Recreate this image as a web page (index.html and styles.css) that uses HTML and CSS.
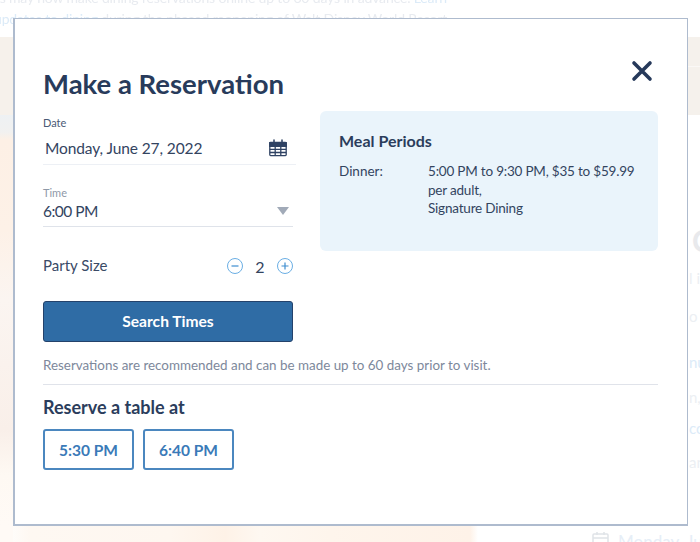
FILE: index.html
```html
<!DOCTYPE html>
<html lang="en">
  <head>
    <meta charset="UTF-8" />
    <meta name="viewport" content="width=device-width, initial-scale=1.0" />
    <title>Make a Reservation</title>
    <link rel="stylesheet" href="styles.css">
  </head>
  <body>
    <div class="backdrop">
      <div class="intro">
        <p class="intro-first">Guests may now make dining reservations online up to 60 days in advance. <span class="link">Learn</span></p>
        <p class="intro-second"><span class="link">updates to dining</span> during the phased reopening of Walt Disney World Resort</p>
      </div>
      <div class="photo"></div>
      <div class="side">
        <span class="side-big">C</span>
        <span class="side-line s1">l in</span>
        <span class="side-line s2">o t</span>
        <span class="side-line s3 link">nu</span>
        <span class="side-line s4">n,</span>
        <span class="side-line s5 link">co</span>
        <span class="side-line s6">an</span>
      </div>
      <div class="date-behind">
        <svg width="17" height="16" viewBox="0 0 17 16" fill="none" stroke="#e0e3e8" stroke-width="1.5"><rect x="1" y="3" width="15" height="12" rx="1"/><path d="M1 7h15M5 1v3M12 1v3"/></svg>
        <span>Monday, June</span>
      </div>
    </div>

    <div class="modal">
      <button class="close" aria-label="Close">
        <svg width="22" height="22" viewBox="0 0 22 22" fill="none" stroke="#26395a" stroke-width="3.6" stroke-linecap="round"><path d="M3 3l16 16M19 3L3 19"/></svg>
      </button>
      <h1>Make a Reservation</h1>

      <div class="columns">
        <form class="fields">
          <div class="field date-field">
            <label>Date</label>
            <div class="value-row">
              <span class="date-value">Monday, June 27, 2022</span>
              <svg class="cal" width="18" height="18" viewBox="0 0 18 18" fill="none" stroke="#2f4263" stroke-width="1.3">
                <path d="M1.6 3.4h14.8a.8.8 0 0 1 .8.8v11.6a.8.8 0 0 1-.8.8H1.6a.8.8 0 0 1-.8-.8V4.200a.8.8 0 0 1 .8-.8z"/>
                <path d="M.8 3.600h16.400V7.400H.8z" fill="#2f4263"/>
                <path d="M.8 10.400h16.400M.8 13.500h16.400M6.200 7.400v9.200M11.800 7.400v9.200"/>
                <path d="M5 1v3.500M13 1v3.500" stroke-width="1.500" stroke-linecap="round"/>
              </svg>
            </div>
          </div>

          <div class="field time-field">
            <label>Time</label>
            <div class="value-row">
              <span class="time-value">6:00 PM</span>
              <span class="caret"></span>
            </div>
          </div>

          <div class="party">
            <span class="party-label">Party Size</span>
            <div class="stepper">
              <svg class="minus" width="16" height="16" viewBox="0 0 16 16" fill="none" stroke="#6aaee4"><circle cx="8" cy="8" r="7.500"/><path d="M4.500 8h7" stroke="#3f8ed0" stroke-width="1.200"/></svg>
              <span class="count">2</span>
              <svg class="plus" width="16" height="16" viewBox="0 0 16 16" fill="none" stroke="#6aaee4"><circle cx="8" cy="8" r="7.500"/><path d="M4.500 8h7M8 4.500v7" stroke="#3f8ed0" stroke-width="1.200"/></svg>
            </div>
          </div>

          <button type="button" class="search">Search Times</button>
        </form>

        <aside class="meals">
          <h2>Meal Periods</h2>
          <div class="meal-row">
            <span class="meal-name">Dinner:</span>
            <p>5:00 PM to 9:30 PM, $35 to $59.99<br>per adult,<br>Signature Dining</p>
          </div>
        </aside>
      </div>

      <p class="note">Reservations are recommended and can be made up to 60 days prior to visit.</p>

      <div class="reserve">
        <h3>Reserve a table at</h3>
        <div class="slots">
          <button class="slot">5:30 PM</button>
          <button class="slot">6:40 PM</button>
        </div>
      </div>
    </div>
  </body>
</html>
```

FILE: styles.css
```css
* {
  margin: 0;
  padding: 0;
  box-sizing: border-box;
  font-family: Lato, "Open Sans", Arial, sans-serif;
}

html, body {
  width: 700px;
  height: 542px;
  overflow: hidden;
}

body {
  background: #fff;
  color: #2b3d5c;
}

/* page behind the modal, faded out */
.backdrop {
  position: absolute;
  inset: 0;
  overflow: hidden;
  background: #fff;
}

.intro {
  color: #e8ebf0;
  font-size: 14px;
  letter-spacing: -0.15px;
  line-height: 21px;
  margin-top: -13px;
  white-space: nowrap;
  filter: blur(0.5px);
}

.intro-first {
  margin-left: -36px;
}

.intro-second {
  margin-left: -6px;
}

.link {
  color: #dcebf8;
}

.photo {
  position: absolute;
  left: 0;
  top: 0;
  width: 700px;
  height: 542px;
  background:
    linear-gradient(180deg, transparent 37px, #f5f1ec 37px, #f5f1ec 66px, #faf8f6 66px, #faf8f6 67px, #f5f1ec 67px, #f5f1ec 115px, transparent 115px) 688px 0 / 12px 100% no-repeat,
    linear-gradient(180deg, transparent 37px, #f6f1eb 37px, #f6f1eb 115px, #eef1f3 115px, #f1f1f0 132px, #fdf0e5 140px, #fdf1e7 230px, #fbf5f1 300px, #f9efe9 430px, #fef9f3 475px, #fffaf6 525px) 0 0 / 13px 100% no-repeat,
    linear-gradient(90deg, #fff 0, #fef8f2 30px, #fef7f0 170px, #fef2e7 225px, #fef8f1 260px, #fef5ec 330px, #fef2e8 470px, #fff 478px) 0 100% / 100% 17px no-repeat;
}

.side {
  position: absolute;
  left: 688px;
  top: 0;
  width: 12px;
  height: 542px;
  color: #eceff3;
  font-size: 15px;
}

.side-big,
.side-line {
  position: absolute;
  left: 1px;
  white-space: nowrap;
}

.side-big {
  top: 222px;
  left: 4px;
  font-size: 30px;
  font-weight: 700;
  color: #e8e9ec;
}

.s1 { top: 269px; }
.s2 { top: 307px; }
.s3 { top: 353px; }
.s4 { top: 388px; }
.s5 { top: 419px; }
.s6 { top: 453px; }

.date-behind {
  position: absolute;
  left: 592px;
  top: 531px;
  display: flex;
  gap: 9px;
  color: #e6eef7;
  font-size: 17px;
  white-space: nowrap;
}

.modal {
  position: absolute;
  left: 13px;
  top: 18px;
  width: 675px;
  height: 508px;
  background: #fff;
  border: 1px solid #aebbce;
  border-width: 1px 1px 2px 2px;
  padding: 49px 29px 0 28px;
}

.close {
  position: absolute;
  top: 41px;
  right: 34px;
  border: none;
  background: none;
  display: flex;
}

h1 {
  font-size: 27.5px;
  font-weight: 700;
  line-height: 32px;
  color: #283b5b;
}

.columns {
  display: flex;
  gap: 24px;
  margin-top: 16px;
}

.fields {
  width: 253px;
  flex-shrink: 0;
}

.field label {
  display: block;
  font-size: 11px;
  line-height: 14px;
}

.value-row {
  display: flex;
  align-items: center;
  justify-content: space-between;
}

.date-field label {
  color: #4a5a76;
}

.date-field .value-row {
  height: 35px;
  padding: 1px 9px 0 2px;
  border-bottom: 1px solid #edf0f5;
}

.date-value {
  font-size: 15.5px;
  letter-spacing: -0.1px;
  color: #33445f;
}

.time-field {
  width: 250px;
  margin-top: 21px;
}

.time-field label {
  color: #8e98a8;
}

.time-field .value-row {
  height: 27px;
  padding: 0 4px 4px 0;
  border-bottom: 1px solid #dfe3ea;
}

.time-value {
  font-size: 15.5px;
  letter-spacing: -0.5px;
  color: #33445f;
}

.caret {
  width: 0;
  height: 0;
  border-left: 6px solid transparent;
  border-right: 6px solid transparent;
  border-top: 8px solid #a1aab8;
}

.party {
  width: 250px;
  display: flex;
  align-items: center;
  justify-content: space-between;
  margin-top: 27px;
  height: 24px;
}

.party-label {
  padding-bottom: 2px;
  font-size: 15px;
  color: #3a4a66;
}

.stepper {
  display: flex;
  align-items: center;
}

.count {
  width: 34px;
  padding-top: 1px;
  text-align: center;
  font-size: 16px;
  color: #33445f;
}

.search {
  display: block;
  width: 250px;
  height: 41px;
  margin-top: 23px;
  padding-bottom: 2px;
  background: #2f6ca5;
  border: 1px solid #24426b;
  border-radius: 3px;
  color: #fff;
  font-size: 15.6px;
  font-weight: 700;
}

.meals {
  width: 339px;
  height: 140px;
  margin-top: -5px;
  background: #eaf4fb;
  border-radius: 6px;
  padding: 20px 19px;
}

.meals h2 {
  font-size: 16px;
  font-weight: 700;
  line-height: 20px;
  color: #2b3d5c;
}

.meal-row {
  display: flex;
  margin-top: 11px;
  font-size: 13.5px;
  line-height: 18.5px;
  color: #33445f;
}

.meal-row p {
  letter-spacing: -0.2px;
  white-space: nowrap;
}

.meal-name {
  width: 89px;
  flex-shrink: 0;
}

.note {
  margin-top: 14px;
  padding-bottom: 10px;
  font-size: 13.4px;
  line-height: 18px;
  color: #7d889b;
  border-bottom: 1px solid #e0e3ea;
}

.reserve h3 {
  margin-top: 12px;
  font-size: 18px;
  font-weight: 700;
  line-height: 20px;
  color: #2b3d5c;
}

.slots {
  display: flex;
  gap: 9px;
  margin-top: 12px;
}

.slot {
  width: 91px;
  height: 41px;
  background: #fff;
  border: 2px solid #4b87bf;
  border-radius: 3px;
  color: #3a7ab8;
  font-size: 15.5px;
  font-weight: 700;
}
```
